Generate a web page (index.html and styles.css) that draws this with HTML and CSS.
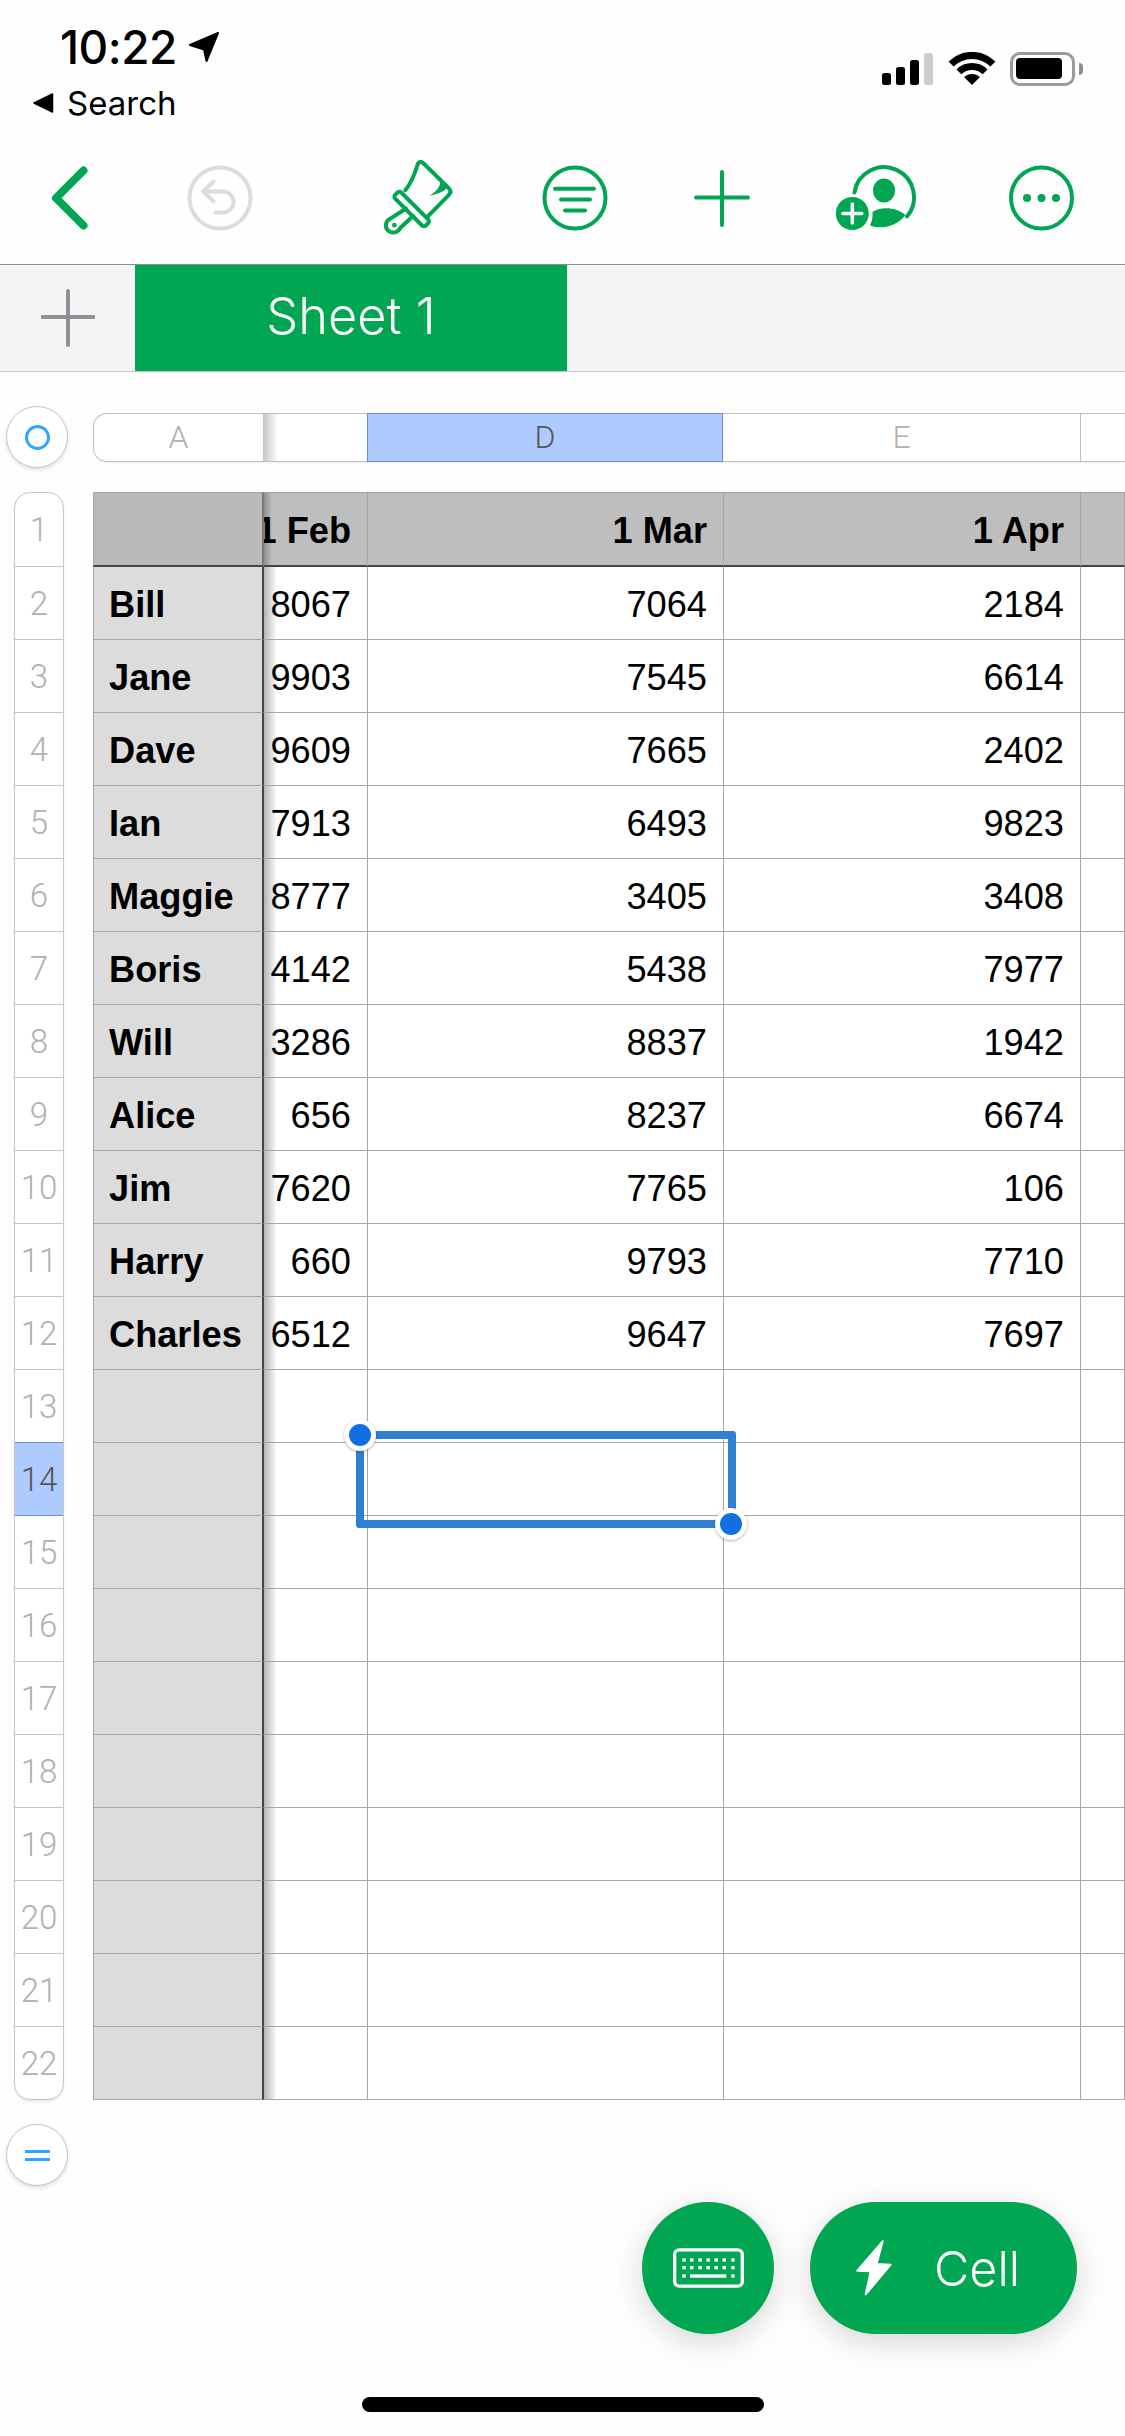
FILE: index.html
```html
<!DOCTYPE html>
<html lang="en">
<head>
<meta charset="utf-8">
<title>Sheet 1</title>
<link rel="stylesheet" href="styles.css">
</head>
<body>
<div class="page">
  <header class="status">
    <div class="status-left">
      <div class="clock"><span class="time">10:22</span>
        <svg class="loc" viewBox="0 0 32 32"><path d="M30 2 2 14l14 4.500L18.500 30z"/></svg>
      </div>
      <div class="crumb">
        <svg class="crumb-arrow" viewBox="0 0 22 22"><path d="M20.500 2v18L2 11z"/></svg>
        <span>Search</span>
      </div>
    </div>
    <div class="status-right">
      <div class="signal"><i class="b1"></i><i class="b2"></i><i class="b3"></i><i class="b4"></i></div>
      <svg class="wifi" viewBox="0 0 46 33">
        <path class="wifi-arc" d="M2.100 12.100a29.500 29.500 0 0 1 41.800 0"/>
        <path class="wifi-arc" d="M9.900 19.900a18.500 18.500 0 0 1 26.200 0"/>
        <path d="M23 33 15.200 25.200a11 11 0 0 1 15.600 0z"/>
      </svg>
      <div class="battery"><div class="battery-body"><div class="battery-fill"></div></div><div class="battery-nub"></div></div>
    </div>
  </header>

  <nav class="toolbar">
    <svg class="tool t-back" viewBox="0 0 80 80"><path class="s8" d="M54.500 12.500 27 40l27.500 27.500"/></svg>
    <svg class="tool t-undo" viewBox="0 0 80 80"><g class="muted"><circle cx="40" cy="40" r="30.500"/><path d="M33.600 23.500 23 33.500l10.600 9.700M23 33.500h20a10.500 10.500 0 0 1 0 21h-7.600"/></g></svg>
    <svg class="tool t-brush" viewBox="114 55.500 240 240">
      <g class="s12">
        <path d="M196 152C215 130 225 100 232 78c3-12 11-14 19-6l75 74c7 7 7 14 0 21l-64 65"/>
        <rect x="150" y="195.500" width="130" height="26" rx="8" transform="rotate(45 215 208.500)"/>
        <path d="M198 207 150 238c-16 8-16 30-2 38 14 8 28 0 34-12l38-35"/>
      </g>
      <circle class="fill" cx="163" cy="257" r="7"/>
      <path class="fill" d="M300 122c3 18-10 33-32 46 27-3 44-13 54-23z"/>
    </svg>
    <svg class="tool t-filter" viewBox="0 0 80 80"><g class="s4"><circle cx="40" cy="40" r="30.500"/><path d="M20 30.800h39M26 41.500h29M30 52.500h20"/></g></svg>
    <svg class="tool t-plus" viewBox="0 0 80 80"><path class="s4" d="M40 14v53M14 39.500h52"/></svg>
    <svg class="tool t-person" viewBox="0 0 80 80">
      <path class="s4" d="M9.400 34.500A30 30 0 1 1 62 58.500"/>
      <ellipse class="fill" cx="39" cy="32.500" rx="11" ry="12"/>
      <path class="fill" d="M27.500 54C34 49 50 48 60.500 57A31.500 31.500 0 0 1 25 67.500C27 63 28 59 27.500 54z"/>
      <circle class="fill" cx="7.300" cy="55.500" r="16.500"/>
      <path class="plus-white" d="M7.300 46v19M-2.200 55.500h19"/>
    </svg>
    <svg class="tool t-more" viewBox="0 0 80 80"><circle class="s4" cx="40.500" cy="40" r="30.500"/><circle class="fill" cx="26" cy="40" r="4"/><circle class="fill" cx="40.500" cy="40" r="4"/><circle class="fill" cx="55" cy="40" r="4"/></svg>
  </nav>

  <div class="sheetbar">
    <div class="add-sheet"><svg class="add-icon" viewBox="0 0 54 58"><path d="M27 2v54M1.500 28h51"/></svg></div>
    <div class="tab">Sheet 1</div>
  </div>

  <main class="sheet">
    <button class="round"><span class="ring"></span></button>
    <div class="cols">
      <div class="col col-a">A</div>
      <div class="col col-c"></div>
      <div class="col col-on">D</div>
      <div class="col">E</div>
      <div class="col col-last"></div>
    </div>

    <div class="rows">
      <div class="rownum">1</div><div class="rownum">2</div><div class="rownum">3</div><div class="rownum">4</div><div class="rownum">5</div><div class="rownum">6</div><div class="rownum">7</div><div class="rownum">8</div><div class="rownum">9</div><div class="rownum">10</div><div class="rownum">11</div><div class="rownum">12</div><div class="rownum">13</div><div class="rownum rownum-on">14</div><div class="rownum">15</div><div class="rownum">16</div><div class="rownum">17</div><div class="rownum">18</div><div class="rownum">19</div><div class="rownum">20</div><div class="rownum">21</div><div class="rownum">22</div>
    </div>

    <div class="table">
      <div class="c h a"></div><div class="c h b">1 Feb</div><div class="c h">1 Mar</div><div class="c h">1 Apr</div><div class="c h"></div>
      <div class="c a">Bill</div><div class="c b">8067</div><div class="c">7064</div><div class="c">2184</div><div class="c"></div>
      <div class="c a">Jane</div><div class="c b">9903</div><div class="c">7545</div><div class="c">6614</div><div class="c"></div>
      <div class="c a">Dave</div><div class="c b">9609</div><div class="c">7665</div><div class="c">2402</div><div class="c"></div>
      <div class="c a">Ian</div><div class="c b">7913</div><div class="c">6493</div><div class="c">9823</div><div class="c"></div>
      <div class="c a">Maggie</div><div class="c b">8777</div><div class="c">3405</div><div class="c">3408</div><div class="c"></div>
      <div class="c a">Boris</div><div class="c b">4142</div><div class="c">5438</div><div class="c">7977</div><div class="c"></div>
      <div class="c a">Will</div><div class="c b">3286</div><div class="c">8837</div><div class="c">1942</div><div class="c"></div>
      <div class="c a">Alice</div><div class="c b">656</div><div class="c">8237</div><div class="c">6674</div><div class="c"></div>
      <div class="c a">Jim</div><div class="c b">7620</div><div class="c">7765</div><div class="c">106</div><div class="c"></div>
      <div class="c a">Harry</div><div class="c b">660</div><div class="c">9793</div><div class="c">7710</div><div class="c"></div>
      <div class="c a">Charles</div><div class="c b">6512</div><div class="c">9647</div><div class="c">7697</div><div class="c"></div>
      <div class="c a"></div><div class="c b"></div><div class="c"></div><div class="c"></div><div class="c"></div>
      <div class="c a"></div><div class="c b"></div><div class="c"></div><div class="c"></div><div class="c"></div>
      <div class="c a"></div><div class="c b"></div><div class="c"></div><div class="c"></div><div class="c"></div>
      <div class="c a"></div><div class="c b"></div><div class="c"></div><div class="c"></div><div class="c"></div>
      <div class="c a"></div><div class="c b"></div><div class="c"></div><div class="c"></div><div class="c"></div>
      <div class="c a"></div><div class="c b"></div><div class="c"></div><div class="c"></div><div class="c"></div>
      <div class="c a"></div><div class="c b"></div><div class="c"></div><div class="c"></div><div class="c"></div>
      <div class="c a"></div><div class="c b"></div><div class="c"></div><div class="c"></div><div class="c"></div>
      <div class="c a"></div><div class="c b"></div><div class="c"></div><div class="c"></div><div class="c"></div>
      <div class="c a"></div><div class="c b"></div><div class="c"></div><div class="c"></div><div class="c"></div>
      <div class="selection"><span class="handle handle-tl"></span><span class="handle handle-br"></span></div>
    </div>

    <button class="round round-eq"><span class="eq"></span></button>
  </main>

  <div class="actions">
    <button class="fab fab-key">
      <svg class="kbd" viewBox="157 205 212 118">
        <rect class="kbd-frame" x="162" y="210" width="202" height="108" rx="14"/>
        <g class="kbd-keys">
          <rect x="185" y="235" width="10" height="10"/><rect x="208" y="235" width="10" height="10"/><rect x="233" y="235" width="10" height="10"/><rect x="257" y="235" width="10" height="10"/><rect x="281" y="235" width="10" height="10"/><rect x="305" y="235" width="10" height="10"/><rect x="331" y="235" width="10" height="10"/>
          <rect x="185" y="258" width="10" height="10"/><rect x="208" y="258" width="10" height="10"/><rect x="233" y="258" width="10" height="10"/><rect x="257" y="258" width="10" height="10"/><rect x="281" y="258" width="10" height="10"/><rect x="305" y="258" width="10" height="10"/><rect x="331" y="258" width="10" height="10"/>
          <rect x="185" y="283" width="10" height="10"/><rect x="208" y="283" width="108" height="10"/><rect x="331" y="283" width="10" height="10"/>
        </g>
      </svg>
    </button>
    <button class="fab fab-cell">
      <svg class="bolt" viewBox="708 180 108 168"><path d="M788 184 712 272l40 2-15 69 75-89-42-2z"/></svg>
      <span>Cell</span>
    </button>
  </div>
  <div class="home"></div>
</div>
</body>
</html>
```

FILE: styles.css
```css
* { box-sizing: border-box; }
html, body { margin: 0; padding: 0; background: #fefefe; }
body { width: 1125px; height: 2436px; overflow: hidden; }
.page { width: 1125px; height: 2436px; display: flex; flex-direction: column; overflow: hidden; font-family: Inter, "Liberation Sans", sans-serif; color: #000; }
button { border: 0; padding: 0; margin: 0; font: inherit; }

/* status bar */
.status { height: 158px; display: flex; justify-content: space-between; align-items: flex-start; padding: 0 42px 0 32px; }
.status-left { display: flex; flex-direction: column; padding-top: 22px; }
.clock { display: flex; align-items: center; margin-left: 28px; height: 50px; gap: 11px; }
.time { font-size: 46px; font-weight: 500; line-height: 50px; letter-spacing: -.5px; }
.loc { width: 32px; height: 32px; margin-top: 0; }
.loc path { fill: #000; stroke: #000; stroke-width: 2; stroke-linejoin: round; }
.crumb { display: flex; align-items: center; gap: 13px; margin-top: 9px; height: 44px; font-size: 33px; line-height: 44px; }
.crumb-arrow { width: 22px; height: 22px; }
.crumb-arrow path { fill: #000; stroke: #000; stroke-width: 1.500; stroke-linejoin: round; }
.status-right { display: flex; align-items: flex-start; padding-top: 52px; }
.signal { width: 52px; height: 33px; display: flex; align-items: flex-end; gap: 5px; margin-right: 15px; }
.signal i { display: block; width: 9px; border-radius: 2.500px; background: #000; }
.signal .b1 { height: 12px; }
.signal .b2 { height: 18px; }
.signal .b3 { height: 25px; }
.signal .b4 { height: 32px; background: #ccc; }
.wifi { width: 46px; height: 33px; margin-right: 15px; }
.wifi-arc { fill: none; stroke: #000; stroke-width: 7; }
.battery { display: flex; align-items: center; height: 34px; gap: 4px; }
.battery-body { width: 65px; height: 34px; border: 3.500px solid #9b9b9b; border-radius: 10px; padding: 3px; }
.battery-fill { width: 46px; height: 21px; background: #000; border-radius: 4px; }
.battery-nub { width: 4px; height: 12px; background: #8e8e8e; border-radius: 0 4px 4px 0; }

/* toolbar */
.toolbar { height: 106px; display: flex; align-items: flex-start; padding-left: 28.500px; }
.tool { width: 80px; height: 80px; flex: none; overflow: visible; fill: none; }
.t-undo { margin-left: 71.500px; }
.t-brush { margin-left: 118px; }
.t-filter { margin-left: 77px; }
.t-plus { margin-left: 67px; }
.t-person { margin-left: 83px; }
.t-more { margin-left: 76px; }
.s4, .s8, .s12, .muted { fill: none; stroke: #00a651; stroke-linecap: round; stroke-linejoin: round; }
.s4 { stroke-width: 4; }
.s8 { stroke-width: 8; }
.s12 { stroke-width: 12; }
.muted { stroke: #dcdcdc; stroke-width: 4; }
.fill { fill: #00a651; }
.plus-white { fill: none; stroke: #fff; stroke-width: 3.500; stroke-linecap: round; }

/* sheet bar */
.sheetbar { height: 108px; display: flex; background: #f4f4f6; border-top: 1px solid #8e8e8e; border-bottom: 1px solid #c8c8c8; }
.add-sheet { width: 135px; display: flex; align-items: center; justify-content: center; }
.add-icon { width: 54px; height: 58px; }
.add-icon path { fill: none; stroke: #8e8e93; stroke-width: 4; stroke-linecap: round; }
.tab { width: 432px; padding-bottom: 5px; background: #00a651; color: #fff; display: flex; align-items: center; justify-content: center; font-size: 50.500px; font-weight: 300; }

/* sheet */
.sheet { display: grid; grid-template-columns: 93px 1032px; grid-template-rows: 62px 1608px 62px; row-gap: 24px; padding-top: 34px; }
.round { width: 62px; height: 62px; margin-left: 6px; border-radius: 50%; background: #fff; border: 1px solid #c4c4c4; box-shadow: 0 2px 4px rgba(0,0,0,.12); display: flex; align-items: center; justify-content: center; }
.ring { width: 25px; height: 25px; border-radius: 50%; border: 3px solid #2ea6ff; }
.eq { width: 25px; height: 11px; border-top: 3.500px solid #2ea6ff; border-bottom: 3.500px solid #2ea6ff; }
.round-eq { grid-column: 1; }

.cols { display: grid; grid-template-columns: 170px 104px 356px 358px 44px; height: 49px; margin-top: 7px; font-family: Roboto, "Liberation Sans", sans-serif; font-weight: 300; font-size: 32px; color: #b0b0b0; }
.col { display: flex; align-items: center; justify-content: center; padding-bottom: 2px; background: #fff; border-top: 1px solid #c0c0c0; border-bottom: 1px solid #c0c0c0; border-right: 1px solid #c0c0c0; box-shadow: 0 1px 2px rgba(0,0,0,.06); }
.col-a { border-left: 1px solid #c0c0c0; border-right: 0; border-radius: 14px 0 0 14px; }
.col-c { border-right: 0; background: linear-gradient(90deg, #c4c4c4, #fff 15px); }
.col-on { background: #aecbff; color: #555; border-color: #6a8fc9; border-left: 1px solid #6a8fc9; }
.col-last { border-right: 0; }

.rows { width: 50px; margin-left: 14px; height: 1608px; display: grid; grid-template-rows: 74px repeat(21, 73px); border: 1px solid #c6c6c6; border-radius: 16px; overflow: hidden; box-shadow: 0 2px 3px rgba(0,0,0,.08); font-family: Roboto, "Liberation Sans", sans-serif; font-weight: 300; font-size: 33px; color: #b0b0b0; background: #fff; }
.rownum { display: flex; align-items: center; justify-content: center; border-bottom: 1px solid #c6c6c6; }
.rownum:last-child { border-bottom: 0; }
.rownum-on { background: #aecbff; color: #555; border-bottom: 1px solid #6a8fc9; box-shadow: 0 -1px 0 #6a8fc9; }

.table { position: relative; display: grid; grid-template-columns: 171px 104px 356px 357px 44px; grid-template-rows: 75px repeat(21, 73px); height: 1608px; font-family: "Liberation Sans", Arial, sans-serif; font-size: 36.200px; background: #fff; }
.c { display: flex; align-items: center; justify-content: flex-end; padding: 3px 16px 0; white-space: nowrap; overflow: hidden; border-right: 1px solid #a6a6a6; border-bottom: 1px solid #a6a6a6; }
.a { justify-content: flex-start; padding-left: 15px; background: #dcdcdc; font-weight: 700; border-left: 1px solid #a6a6a6; border-right: 2px solid #444; }
.b { background: linear-gradient(90deg, #b4b4b4, rgba(255,255,255,0) 13px); padding-left: 0; }
.h { background: #bebebe; font-weight: 700; border-top: 1px solid #a6a6a6; border-bottom: 2px solid #444; }
.h.a { background: #bababa; border-right: 2px solid #7a7a7a; }
.h.b { background: linear-gradient(90deg, #8e8e8e, #bebebe 8px); }

.selection { position: absolute; left: 263px; top: 939px; width: 380px; height: 97px; border: 8px solid #2f80d3; border-radius: 3px; }
.handle { position: absolute; width: 32px; height: 32px; border-radius: 50%; background: #126fe3; border: 5.500px solid #fff; box-shadow: 0 1px 3px rgba(0,0,0,.3); }
.handle-tl { left: -20px; top: -20px; }
.handle-br { right: -19px; bottom: -20px; }

/* floating actions */
.actions { display: flex; justify-content: flex-end; gap: 36px; padding-right: 48px; margin-top: 16px; }
.fab { height: 132px; border-radius: 66px; background: #00a651; color: #fff; display: flex; align-items: center; box-shadow: 0 8px 32px rgba(0,0,0,.16); }
.fab-key { width: 132px; justify-content: center; }
.fab-cell { width: 267px; padding-left: 46px; gap: 42px; font-size: 48.500px; font-weight: 300; }
.kbd { width: 71px; height: 40px; }
.kbd-frame { fill: none; stroke: #fff; stroke-width: 10; }
.kbd-keys { fill: #fff; }
.bolt { width: 36px; height: 56px; }
.bolt path { fill: #fff; stroke: #fff; stroke-width: 6; stroke-linejoin: round; }

.home { width: 402px; height: 15px; margin: 63px auto 0; background: #000; border-radius: 8px; flex: none; }
```
